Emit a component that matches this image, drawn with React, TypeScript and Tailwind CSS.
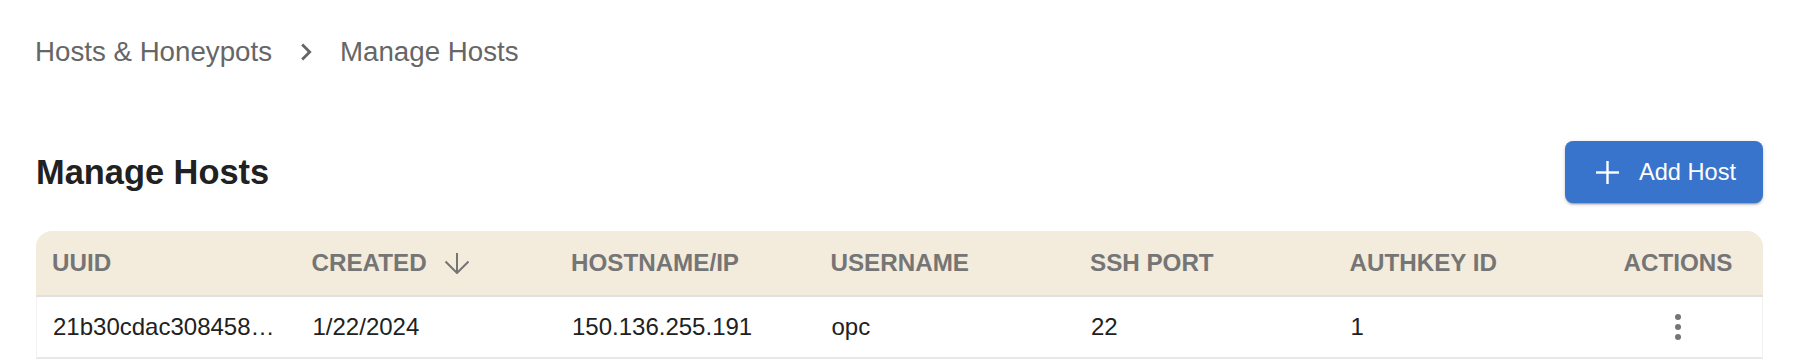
import React from "react";

const headers = ["UUID", "CREATED", "HOSTNAME/IP", "USERNAME", "SSH PORT", "AUTHKEY ID"];
const row = ["21b30cdac308458…", "1/22/2024", "150.136.255.191", "opc", "22", "1"];

function SortArrow() {
  return (
    <svg width="26" height="21" viewBox="0 0 26 21" className="ml-[17px] shrink-0" fill="none" stroke="#757575" strokeWidth="2" strokeLinecap="butt" strokeLinejoin="miter">
      <line x1="13" y1="0" x2="13" y2="19.5" />
      <polyline points="1.5,8.5 13,20 24.5,8.5" />
    </svg>
  );
}

export default function App() {
  return (
    <div className="w-[1796px] h-[360px] overflow-hidden bg-white pl-[36px] pr-[33px] pt-[36px] font-['Liberation_Sans',Arial,Helvetica,sans-serif]">
      <nav className="flex h-[32px] items-center text-[27.7px] leading-[32px] text-[#666666] -ml-[1px]">
        <span>Hosts &amp; Honeypots</span>
        <svg width="34" height="34" viewBox="0 0 24 24" className="mx-[17px] shrink-0" fill="#666666">
          <path d="M10 6 8.59 7.41 13.17 12l-4.58 4.59L10 18l6-6z" />
        </svg>
        <span>Manage Hosts</span>
      </nav>

      <div className="mt-[73px] flex h-[62px] items-center justify-between">
        <h1 className="text-[34.4px] font-bold leading-[40px] text-[#212121]">Manage Hosts</h1>
        <button className="flex h-[62px] items-center rounded-[8px] bg-[#3874cb] pl-[31px] pr-[27px] text-[23.6px] leading-[28px] text-white shadow-[0_3px_1px_-2px_rgba(0,0,0,0.2),0_2px_2px_0_rgba(0,0,0,0.14),0_1px_5px_0_rgba(0,0,0,0.12)]">
          <svg width="23" height="23" viewBox="0 0 22 22" fill="none" stroke="white" strokeWidth="2.3">
            <line x1="11" y1="0" x2="11" y2="22" />
            <line x1="0" y1="11" x2="22" y2="11" />
          </svg>
          <span className="ml-[20px]">Add Host</span>
        </button>
      </div>

      <div className="mt-[28px] w-[1727px]">
        <div className="grid h-[66px] grid-cols-[repeat(6,259.5px)_1fr] rounded-t-[16px] border-b-2 border-[#e0e0e0] bg-[#f3ebdb] text-[24.2px] font-bold text-[#757575]">
          {headers.map((h) => (
            <div key={h} className="flex items-center pl-[16px]">
              <span>{h}</span>
              {h === "CREATED" && <SortArrow />}
            </div>
          ))}
          <div className="flex items-center justify-center">ACTIONS</div>
        </div>
        <div className="grid h-[62px] grid-cols-[repeat(6,259.5px)_1fr] border-b-2 border-x border-[#e8e8e8] border-x-[#f2f2f2] bg-white text-[24px] text-[#212121]">
          {row.map((c, i) => (
            <div key={i} className="flex items-center pl-[16px] whitespace-nowrap">
              {c}
            </div>
          ))}
          <div className="flex items-center justify-center">
            <div className="flex flex-col items-center gap-[4px]">
              <span className="block h-[6px] w-[6px] rounded-full bg-[#757575]" />
              <span className="block h-[6px] w-[6px] rounded-full bg-[#757575]" />
              <span className="block h-[6px] w-[6px] rounded-full bg-[#757575]" />
            </div>
          </div>
        </div>
      </div>
    </div>
  );
}
